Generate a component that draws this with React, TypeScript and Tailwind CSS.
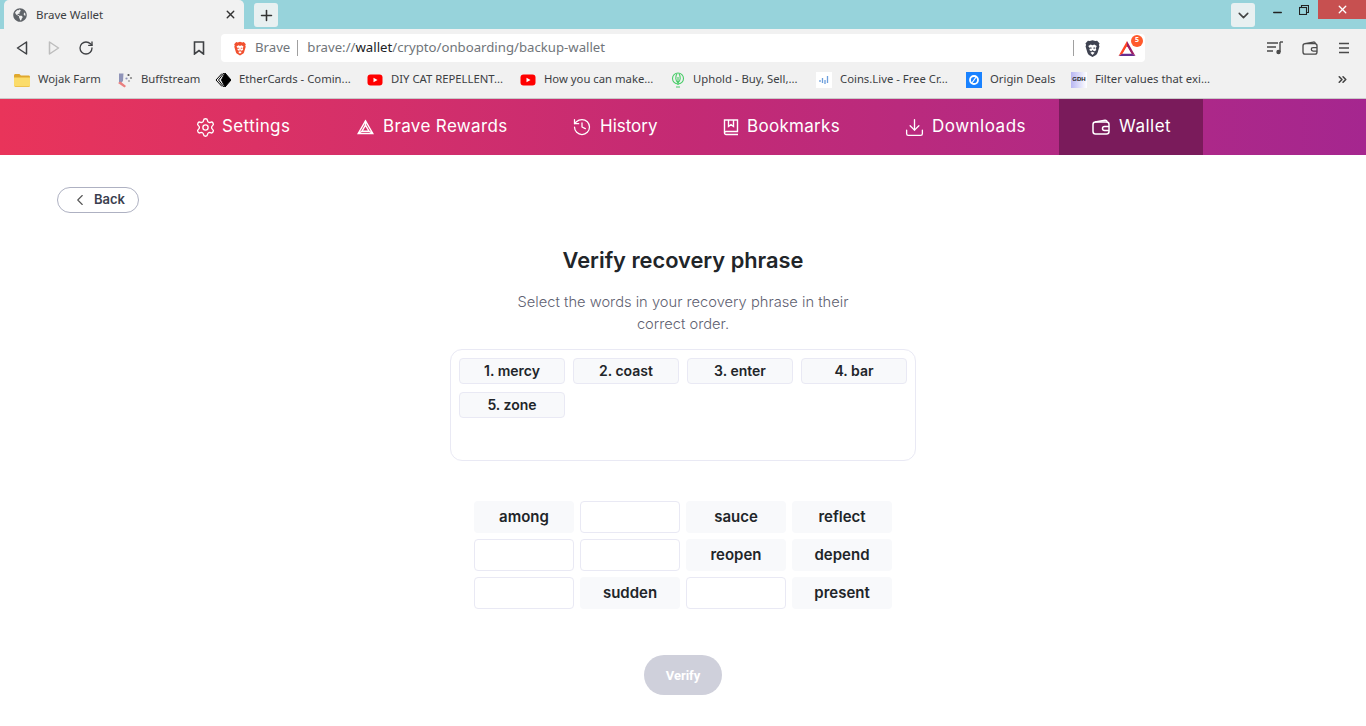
import { ChevronDown, ChevronLeft, ChevronsRight, Download, History, Minus, Plus, RotateCw, Settings, X } from "lucide-react";
import { FaGlobeAmericas } from "react-icons/fa";
import type { ReactNode } from "react";

function BraveLogo({ className }: { className: string }) {
  return (
    <svg viewBox="0 0 24 24" className={className}>
      <path fill="currentColor" d="M12 .5 8 1.500 5.500 1 2 4.800l1 2L2.200 9l2.800 9.500c.4 1.300 1 2 2 2.600l5 3 5-3c1-.6 1.600-1.300 2-2.600L21.800 9 21 6.800l1-2L18.500 1 16 1.500z" />
      <path fill="#fff" d="M6 8.500 9.500 6.500 12 7.500l2.500-1 3.500 2-1.500 3.500 1 2-2.500 2-2.500-1-2.500 1-2.500-2 1-2z" />
      <path fill="currentColor" d="M8 10.500h2.500l.5 1.500-2 .5zM16 10.500h-2.500L13 12l2 .5zM10.500 14h3L12 15.500z" />
      <path fill="#fff" d="m9 18 3-1.500 3 1.500-3 3z" />
    </svg>
  );
}

function BatLogo({ className, mono }: { className: string; mono?: boolean }) {
  if (mono) {
    return (
      <svg viewBox="0 0 18 16" fill="none" stroke="currentColor" strokeWidth="1.500" className={className}>
        <path d="M9 1.500 1.300 14.800h15.400z" />
        <path d="M9 6 5.200 12.500h7.600z" />
        <path d="M1.300 14.800 5.200 12.500M16.700 14.800l-3.900-2.300M9 1.500V6" />
      </svg>
    );
  }
  return (
    <svg viewBox="0 0 18 16" className={className}>
      <path fill="#662d91" d="m0 16 3.400-2.500h11.200L18 16z" />
      <path fill="#ff4724" d="M9 0 0 16l4.500-3L9 5.500z" />
      <path fill="#9e1f63" d="m9 0 9 16-4.500-3L9 5.500z" />
      <path fill="#fff" d="m9 5.800 3.900 6.900H5.100z" />
    </svg>
  );
}

function WalletIcon({ className }: { className: string }) {
  return (
    <svg viewBox="0 0 18 16" fill="none" stroke="currentColor" strokeWidth="1.500" className={className}>
      <path d="M3 3 13 1.200c1-.2 2 .5 2 1.600v.5" />
      <rect x="1" y="3" width="16" height="12" rx="2.500" />
      <path d="M17 7.500h-4.500a2 2 0 0 0 0 4H17" />
    </svg>
  );
}

function BookIcon({ className }: { className: string }) {
  return (
    <svg viewBox="0 0 16 17" fill="none" stroke="currentColor" strokeWidth="1.400" className={className}>
      <path d="M1.500 14V1h13v11.500H3a1.500 1.500 0 0 0 0 3h12" />
      <path d="M5.500 1v6.500l2.500-1.800 2.500 1.800V1" />
    </svg>
  );
}

function MiniIcon({ kind }: { kind: string }) {
  if (kind === "folder") {
    return (
      <svg viewBox="0 0 16 16" className="h-4 w-4 shrink-0">
        <path fill="#e0a82e" d="M0 3.500C0 2.700.6 2 1.400 2h4l1.500 1.500h7.700c.8 0 1.400.6 1.400 1.400v8.700c0 .8-.6 1.400-1.400 1.400H1.400C.6 14.500 0 13.900 0 13.100z" />
        <path fill="#fbdc6a" d="M0 5.500h16v7.700c0 .7-.6 1.300-1.400 1.300H1.400C.6 14.500 0 13.900 0 13.200z" />
      </svg>
    );
  }
  if (kind === "buff") {
    return (
      <svg viewBox="0 0 16 16" className="h-4 w-4 shrink-0">
        <path fill="#8f93b8" d="M2 1.500h4.500L6 9l-2.500 2.500L2 10z" />
        <path fill="#ea7f7f" d="m1 11 2.500-1.500L9 14l-1.500 1.500z" />
        <circle cx="11.500" cy="3" r="1.100" fill="#555" />
        <circle cx="14" cy="6" r="1.100" fill="#888" />
        <circle cx="9.500" cy="6.500" r="1.100" fill="#8f93b8" />
        <circle cx="12" cy="9" r="1.100" fill="#aaa" />
      </svg>
    );
  }
  if (kind === "ether") {
    return (
      <svg viewBox="0 0 16 16" className="h-4 w-4 shrink-0" fill="none" stroke="#000" strokeWidth="1">
        <path fill="#000" d="m10 1 6 7-6 7-3.500-7z" />
        <path d="M7 1.500 1 8l6 6.500M9 1 3.500 8 9 15" />
      </svg>
    );
  }
  if (kind === "yt") {
    return (
      <svg viewBox="0 0 16 16" className="h-4 w-4 shrink-0">
        <rect x="0.500" y="2.500" width="15" height="11" rx="3" fill="#ff0000" />
        <path fill="#fff" d="m6.500 5.700 4 2.300-4 2.300z" />
      </svg>
    );
  }
  if (kind === "uphold") {
    return (
      <svg viewBox="0 0 14 16" className="h-4 w-[14px] shrink-0" fill="none" stroke="#49cc68" strokeWidth="1.100">
        <circle cx="7" cy="6.500" r="5.500" />
        <path d="M7 13V5M7 11C4.500 9 4 5 6 1.500M7 11c2.500-2 3-6 1-9.500M5 15h4" />
      </svg>
    );
  }
  if (kind === "coins") {
    return (
      <svg viewBox="0 0 16 16" className="h-4 w-4 shrink-0">
        <rect width="16" height="16" fill="#fff" />
        <path fill="none" stroke="#6d9fdc" strokeWidth="1.300" d="M4 8v2M6.500 6v5M9 8v4M11.500 4v7" />
      </svg>
    );
  }
  if (kind === "origin") {
    return (
      <svg viewBox="0 0 16 16" className="h-4 w-4 shrink-0">
        <rect width="16" height="16" fill="#1a82ff" />
        <circle cx="8" cy="8" r="4" fill="none" stroke="#fff" strokeWidth="1.800" />
        <path stroke="#fff" strokeWidth="1.200" d="m5.500 11.500 5-7" />
      </svg>
    );
  }
  return (
    <div className="flex h-4 w-4 shrink-0 items-center justify-center bg-gradient-to-r from-[#b9b7f2] to-white font-['Liberation_Sans',sans-serif] text-[6px] font-bold text-[#222]">
      GDH
    </div>
  );
}

const bookmarks = [
  { kind: "folder", label: "Wojak Farm", width: "w-[103px]" },
  { kind: "buff", label: "Buffstream", width: "w-[98px]" },
  { kind: "ether", label: "EtherCards - Comin...", width: "w-[152px]" },
  { kind: "yt", label: "DIY CAT REPELLENT...", width: "w-[153px]" },
  { kind: "yt", label: "How you can make...", width: "w-[151px]" },
  { kind: "uphold", label: "Uphold - Buy, Sell,...", width: "w-[145px]" },
  { kind: "coins", label: "Coins.Live - Free Cr...", width: "w-[150px]" },
  { kind: "origin", label: "Origin Deals", width: "w-[105px]" },
  { kind: "gdh", label: "Filter values that exi...", width: "w-[160px]" },
];

const navItems: { label: string; icon: ReactNode; width: string; track: string; iconBox: string; active?: boolean }[] = [
  { label: "Settings", width: "w-[160px]", track: "tracking-[0.4px]", iconBox: "w-[25px]", icon: <Settings className="-ml-[2px] h-[21px] w-[21px]" strokeWidth={1.500} /> },
  { label: "Brave Rewards", width: "w-[217px]", track: "tracking-[0.35px]", iconBox: "w-[26px]", icon: <BatLogo mono className="h-4 w-[17px]" /> },
  { label: "History", width: "w-[149px]", track: "tracking-normal", iconBox: "w-[26px]", icon: <History className="-ml-[2px] h-5 w-5" strokeWidth={1.500} /> },
  { label: "Bookmarks", width: "w-[183px]", track: "tracking-[0.3px]", iconBox: "w-[24px]", icon: <BookIcon className="h-[17px] w-4" /> },
  { label: "Downloads", width: "w-[186px]", track: "tracking-[0.5px]", iconBox: "w-[26px]", icon: <Download className="-ml-[2px] h-[21px] w-[21px]" strokeWidth={1.500} /> },
  { label: "Wallet", width: "w-[144px]", track: "tracking-[0.5px]", iconBox: "w-[27px]", icon: <WalletIcon className="h-4 w-[18px]" />, active: true },
];

const picked = ["1. mercy", "2. coast", "3. enter", "4. bar", "5. zone"];
const words = ["among", "", "sauce", "reflect", "", "", "reopen", "depend", "", "sudden", "", "present"];

export default function App() {
  return (
    <div className="flex h-[726px] w-[1366px] flex-col overflow-hidden bg-white font-['Inter',sans-serif] text-[#212529]">
      {/* Tab strip */}
      <div className="flex h-[29px] items-start bg-[#97d3db] pl-1">
        <div className="flex h-[29px] w-[240px] items-center rounded-t-[5px] bg-[#f1f1f1] pl-[9px] pr-[7px] font-['Noto_Sans',sans-serif] text-[11.5px] text-[#3c4043]">
          <FaGlobeAmericas className="h-[14px] w-[14px] text-[#5f6368]" />
          <span className="ml-[9px] flex-1">Brave Wallet</span>
          <X className="h-[13px] w-[13px] text-[#333]" strokeWidth={2.500} />
        </div>
        <div className="ml-[10px] mt-[3px] flex h-6 w-6 items-center justify-center rounded-[3px] bg-[#e8f0f1]">
          <Plus className="h-[17px] w-[17px] text-[#333]" strokeWidth={2.200} />
        </div>
        <div className="ml-auto mt-[3px] flex h-6 w-6 items-center justify-center rounded-[3px] bg-[#e8f0f1]">
          <ChevronDown className="h-[17px] w-[17px] text-[#444]" strokeWidth={2.200} />
        </div>
        <div className="flex w-[63px] justify-between pl-4 pr-[9px] pt-[5px] text-[#222]">
          <Minus className="mt-px h-[13px] w-[13px]" strokeWidth={2.500} />
          <svg viewBox="0 0 10 10" fill="none" stroke="currentColor" strokeWidth="1.100" className="h-[10px] w-[10px]">
            <rect x="0.500" y="2.500" width="7" height="7" />
            <path d="M2.500 2.500v-2h7v7h-2" />
          </svg>
        </div>
        <div className="flex h-[19px] w-[48px] items-center justify-center bg-[#c75050]">
          <X className="h-[13px] w-[13px] text-white" strokeWidth={2.500} />
        </div>
      </div>

      {/* Toolbar */}
      <div className="flex h-[33px] items-end bg-[#f1f1f1] pl-[16px] pr-[16px] text-[#444]">
        <div className="flex h-7 items-center">
          <svg viewBox="0 0 12 14" fill="none" stroke="#3f4144" strokeWidth="1.500" strokeLinejoin="round" className="h-[14px] w-3">
            <path d="M10.500 1v12L1.500 7z" />
          </svg>
          <svg viewBox="0 0 12 14" fill="none" stroke="#bdbdbd" strokeWidth="1.500" strokeLinejoin="round" className="ml-[20px] h-[14px] w-3">
            <path d="M1.500 1v12l9-6z" />
          </svg>
          <RotateCw className="ml-[18px] h-[16px] w-[16px] text-[#3f4144]" strokeWidth={2} />
          <svg viewBox="0 0 12 14" fill="none" stroke="#3f4144" strokeWidth="1.600" className="ml-[99px] h-[14px] w-3">
            <path d="M1.500 1h9v12L6 9.500 1.500 13z" />
          </svg>
        </div>
        <div className="ml-4 flex h-7 w-[924px] items-center rounded-[4px] bg-white pl-3 font-['Noto_Sans',sans-serif] text-[13.2px] text-[#70757a]">
          <BraveLogo className="h-[15px] w-[14px] text-[#f1502f]" />
          <span className="ml-2">Brave</span>
          <span className="mx-[7px] h-4 w-px bg-[#a0a0a0]" />
          <span className="ml-[2px]">
            brave://<span className="text-[#202124]">wallet</span>/crypto/onboarding/backup-wallet
          </span>
          <span className="ml-auto h-4 w-px bg-[#a0a0a0]" />
          <BraveLogo className="ml-[10px] h-[19px] w-[17px] text-[#3f4351]" />
          <div className="relative ml-[17px] mr-[9px]">
            <BatLogo className="h-[15px] w-[18px]" />
            <span className="absolute -right-[7px] -top-[6px] flex h-3 w-3 items-center justify-center rounded-full bg-[#ff5a2c] text-[7px] font-bold text-white">
              5
            </span>
          </div>
        </div>
        <div className="flex h-7 flex-1 items-center justify-between pl-[122px] text-[#4a4a4a]">
          <svg viewBox="0 0 16 14" fill="none" stroke="currentColor" strokeWidth="1.400" className="h-[14px] w-4">
            <path d="M0 2h11M0 6h9M0 10h6M13 1v10" />
            <circle cx="11.500" cy="11" r="1.500" fill="currentColor" />
            <path d="M13 1h3" />
          </svg>
        </div>
        <div className="flex h-7 items-center gap-5 text-[#4a4a4a]">
          <WalletIcon className="h-[14px] w-4" />
          <svg viewBox="0 0 12 12" fill="none" stroke="currentColor" strokeWidth="1.500" className="h-3 w-3">
            <path d="M1 1.500h10M1 6h10M1 10.500h10" />
          </svg>
        </div>
      </div>

      {/* Bookmarks bar */}
      <div className="flex h-[37px] items-center border-b border-[#c9c9c9] bg-[#f1f1f1] pl-[14px] pb-px font-['Noto_Sans',sans-serif] text-[11.3px] text-[#3c4043]">
        {bookmarks.map((b) => (
          <div key={b.label} className={`flex items-center gap-2 ${b.width}`}>
            <MiniIcon kind={b.kind} />
            <span className="whitespace-nowrap">{b.label}</span>
          </div>
        ))}
        <ChevronsRight className="ml-[105px] h-[13px] w-[13px] text-[#444]" strokeWidth={3} />
      </div>

      {/* Nav */}
      <div className="flex h-14 bg-gradient-to-r from-[#e9345a] via-[#c42a74] to-[#a5268f] pl-[164px] text-white">
        {navItems.map((item) => (
          <div
            key={item.label}
            className={`flex items-center pl-[33px] text-[17px] ${item.width} ${item.active ? "bg-[#7a1b5b]" : ""}`}
          >
            <div className={`flex shrink-0 items-center ${item.iconBox}`}>{item.icon}</div>
            <span className={item.track}>{item.label}</span>
          </div>
        ))}
      </div>

      {/* Page */}
      <div className="flex flex-1 flex-col pt-8">
        <div className="pl-[57px]">
          <button className="flex h-[26px] w-[82px] items-center justify-center gap-[5px] rounded-full border border-[#aeb1c2] text-[13px] font-semibold text-[#3b3e4f]">
            <ChevronLeft className="h-[18px] w-[18px] text-[#555]" strokeWidth={1.500} />
            Back
          </button>
        </div>

        <div className="flex flex-col items-center">
          <h1 className="mt-[32px] text-[21.8px] font-semibold leading-[30px] text-[#212529]">Verify recovery phrase</h1>
          <p className="mt-[16px] w-[360px] text-center text-[14.7px] font-light leading-[22px] text-[#5f6272]">
            Select the words in your recovery phrase in their correct order.
          </p>

          <div className="mt-[14px] grid h-[112px] w-[466px] grid-cols-4 content-start gap-2 rounded-xl border border-[#e9e9f4] p-2">
            {picked.map((w) => (
              <div
                key={w}
                className="flex h-[26px] items-center justify-center rounded-[4px] border border-[#e9e9f4] bg-[#f8f9fb] text-sm font-semibold"
              >
                {w}
              </div>
            ))}
          </div>

          <div className="mt-10 grid w-[418px] grid-cols-4 gap-[6px]">
            {words.map((w, i) => (
              <div
                key={i}
                className={`flex h-8 items-center justify-center rounded-[4px] text-[15px] font-semibold ${w ? "bg-[#f8f9fb]" : "border border-[#e9e9f4]"}`}
              >
                {w}
              </div>
            ))}
          </div>

          <button className="mt-[46px] h-10 w-[78px] rounded-full bg-[#cfd0db] pt-px font-['Roboto',sans-serif] text-[13px] font-bold text-white">
            Verify
          </button>
        </div>
      </div>
    </div>
  );
}
